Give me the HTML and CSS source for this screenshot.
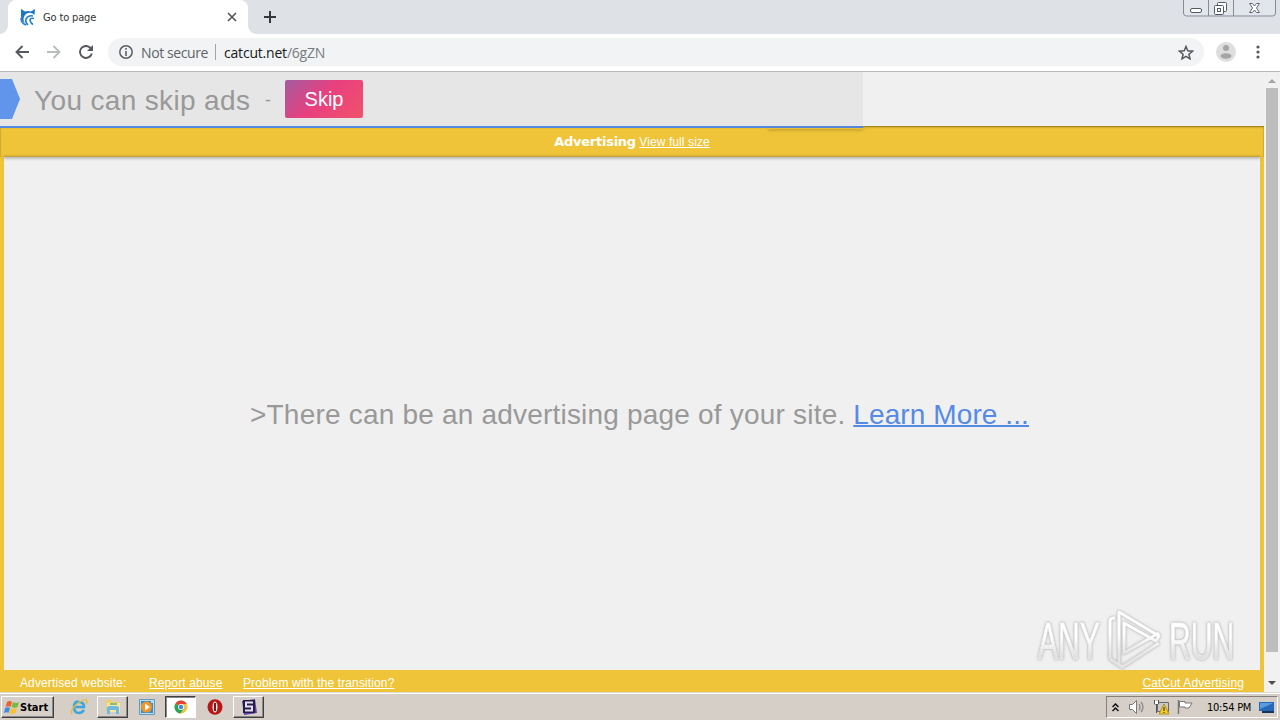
FILE: index.html
```html
<!DOCTYPE html>
<html lang="en">
<head>
  <meta charset="UTF-8">
  <title>Go to page</title>
  <link rel="stylesheet" href="styles.css">
</head>
<body>
  <div class="tab-strip">
    <div class="tab">
      <svg class="favicon" width="16" height="17" viewBox="0 0 16 17">
        <path d="M1 0l4 2.500q3-1 6 0L15 0l-.5 6-2-1.500Q8 2.500 5 6q-3 4 0 8-4-2-4-7z" fill="#1976c5"/>
        <path d="M1 9q0 5 5 7M13 7q-5-1-7 3-1 3 2 6M14 9.500q-4-1-4 2 1 3 3 4" fill="none" stroke="#2580cb" stroke-width="1.600"/>
      </svg>
      <span class="tab-title">Go to page</span>
      <svg class="tab-close" width="10" height="10" viewBox="0 0 10 10"><path d="M1 1l8 8M9 1L1 9" stroke="#55585c" stroke-width="1.700"/></svg>
    </div>
    <svg class="new-tab" width="12" height="12" viewBox="0 0 12 12"><path d="M6 0v12M0 6h12" stroke="#35383d" stroke-width="2"/></svg>
    <svg class="window-buttons" width="94" height="18" viewBox="0 0 94 18">
      <path d="M.5-1v14q0 3 3 3h86q3 0 3-3V-1M25.500 0v16M50.500 0v16" fill="#e2e5ea" stroke="#858b97"/>
      <rect x="7.500" y="8.500" width="11" height="4" rx="1.500" fill="#fff" stroke="#535966"/>
      <rect x="34.500" y="2.500" width="9" height="9" rx="1" fill="#fff" stroke="#535966"/>
      <rect x="31.500" y="5.500" width="9" height="9" rx="1" fill="#fff" stroke="#535966"/>
      <rect x="34.500" y="8.500" width="3" height="3" fill="#fff" stroke="#535966"/>
      <path d="M66.500 3.500h3l2 2.500 2-2.500h3L73.500 8l3 4.500h-3l-2-2.500-2 2.500h-3l3-4.500z" fill="#fff" stroke="#626875"/>
    </svg>
  </div>

  <div class="toolbar">
    <svg width="14" height="14" viewBox="0 0 14 14"><path d="M14 7H1.500M7.500 1l-6 6 6 6" fill="none" stroke="#55585c" stroke-width="1.900"/></svg>
    <svg width="14" height="14" viewBox="0 0 14 14"><path d="M0 7h12.500M6.500 1l6 6-6 6" fill="none" stroke="#babcbe" stroke-width="1.900"/></svg>
    <svg width="14" height="14" viewBox="0 0 14 14"><path d="M12 3.600A6 6 0 1 0 12.800 8.500" fill="none" stroke="#55585c" stroke-width="1.900"/><path d="M14 0v6H8z" fill="#55585c"/></svg>
    <div class="address">
      <svg width="14" height="14" viewBox="0 0 14 14"><circle cx="7" cy="7" r="6.200" fill="none" stroke="#5c6065" stroke-width="1.500"/><path d="M7 3v1.700M7 6v5" stroke="#5c6065" stroke-width="1.600"/></svg>
      <span class="not-secure">Not secure</span>
      <span class="divider"></span>
      <span class="url">catcut.net<span>/6gZN</span></span>
      <svg class="star" width="16" height="15" viewBox="0 0 16 15"><path d="M8 1.500l1.800 4.300 4.700.4-3.600 3.100 1.100 4.500L8 11.300l-4 2.500 1.100-4.500-3.600-3.100 4.700-.4z" fill="none" stroke="#55585c" stroke-width="1.500"/></svg>
    </div>
    <svg class="profile" width="20" height="20" viewBox="0 0 20 20"><circle cx="10" cy="10" r="10" fill="#dedede"/><circle cx="10" cy="6" r="3" fill="#a5a5a5"/><ellipse cx="10" cy="14" rx="5.500" ry="2.800" fill="#a5a5a5"/></svg>
    <svg class="menu" width="4" height="14" viewBox="0 0 4 14"><g fill="#55585c"><circle cx="2" cy="2" r="1.600"/><circle cx="2" cy="7" r="1.600"/><circle cx="2" cy="12" r="1.600"/></g></svg>
  </div>

  <div class="viewport">
    <div class="page">
      <div class="skip-bar">
        <div class="arrow"></div>
        <span class="skip-text">You can skip ads</span>
        <span class="dash">-</span>
        <a class="skip-btn">Skip</a>
      </div>
      <div class="ad-frame">
        <div class="ad-header"><b>Advertising</b> <a>View full size</a></div>
        <div class="ad-body">
          <p class="ad-message"><span>&gt;There can be an advertising page of your site.</span> <a>Learn More ...</a></p>
          <div class="watermark">
            <span>ANY</span>
            <svg width="56" height="62" viewBox="0 0 56 62">
              <defs>
                <linearGradient id="fade" x1="0" y1="0" x2="0" y2="1">
                  <stop offset="0.4" stop-color="#fff"/>
                  <stop offset="0.75" stop-color="#e4e4e4"/>
                </linearGradient>
              </defs>
              <path d="M3 50V12q0-3 5-3M12 46V3l40 24-3 5-32-18v30l35-20M12 46v9l3 3 37-24M3 50l12 8" fill="none" stroke="url(#fade)" stroke-width="3" stroke-linejoin="round"/>
            </svg>
            <span>RUN</span>
          </div>
        </div>
        <div class="ad-footer">
          <span class="advertised">Advertised website:</span>
          <a class="report">Report abuse</a>
          <a class="problem">Problem with the transition?</a>
          <a class="catcut">CatCut Advertising</a>
        </div>
      </div>
    </div>
    <div class="scrollbar">
      <svg width="8" height="4" viewBox="0 0 8 4"><path d="M4 0l4 4H0z" fill="#a3a3a3"/></svg>
      <div class="thumb"></div>
      <svg width="8" height="4" viewBox="0 0 8 4"><path d="M0 0h8L4 4z" fill="#4c4c4c"/></svg>
    </div>
  </div>

  <div class="taskbar">
    <div class="start">
      <svg width="16" height="15" viewBox="0 0 16 15">
        <path d="M3 2q3-2 5 0L6.500 7q-2-1.500-5 0z" fill="#ea6030"/>
        <path d="M9 2q3 2 6 0l-1.500 5q-3 1.500-6 0z" fill="#78b940"/>
        <path d="M1 8q3-1.500 5 0l-1.500 5q-2-1.500-4.500 0z" fill="#3f8de0"/>
        <path d="M7 8q3 1.500 6 0l-1.500 5q-3 2-6 0z" fill="#f6c338"/>
      </svg>
      <span>Start</span>
    </div>
    <div class="task">
      <svg width="18" height="18" viewBox="0 0 18 18"><path d="M14 12q-2 3-5 3-5 0-5-6t5-5q5 0 5 5H5" fill="none" stroke="#3ba5df" stroke-width="2.600"/><path d="M2 16q-2-3 3-8 7-7 11-6 2 1 0 4" fill="none" stroke="#e5bd42" stroke-width="1.500"/></svg>
    </div>
    <div class="task raised">
      <svg width="18" height="16" viewBox="0 0 18 16"><path d="M2 1h6l1 2h7v10H2z" fill="#efcf66"/><path d="M3 4h13v9H3z" fill="#f8e6a0"/><path d="M3 15V9q0-2 3-2h6q3 0 3 2v6h-3v-4H6v4z" fill="#6dbbe2"/><path d="M6 4h7v2H6z" fill="#88b986"/></svg>
    </div>
    <div class="task">
      <svg width="16" height="16" viewBox="0 0 16 16"><path d="M.5.500h15v15H.5z" fill="#b9dbec" stroke="#629abf"/><path d="M2 2h10v2h2v10H2z" fill="#3c8dc5"/><circle cx="7.500" cy="8" r="5.500" fill="#f39522"/><path d="M6 4.500l5 3.500-5 3.500z" fill="#fff"/></svg>
    </div>
    <div class="task raised pressed">
      <svg width="14" height="14" viewBox="0 0 14 14"><circle cx="7" cy="7" r="6.500" fill="#f0c43c"/><path d="M7 7L1.400 3.700A6.500 6.500 0 0 1 12.700 4H7z" fill="#df4436"/><path d="M7 7L1.400 3.700A6.500 6.500 0 0 0 6.500 13.500L9.500 9z" fill="#27a45b"/><circle cx="7" cy="7" r="3" fill="#fff"/><circle cx="7" cy="7" r="2.300" fill="#4788e4"/></svg>
    </div>
    <div class="task">
      <svg width="16" height="16" viewBox="0 0 16 16"><ellipse cx="8" cy="8" rx="7.500" ry="7.800" fill="#b81717"/><ellipse cx="8" cy="8" rx="2.500" ry="5.500" fill="#f5e9e9"/><path d="M7 4h2v8H7z" fill="#851414"/></svg>
    </div>
    <div class="task raised">
      <svg width="16" height="16" viewBox="0 0 16 16"><path d="M1 2l13-2 2 14-13 2z" fill="#6940aa"/><path d="M2 1h12v13H2z" fill="#251c48"/><path d="M12 3.500H5v4h6v4H4" fill="none" stroke="#e5dff6" stroke-width="2"/></svg>
    </div>

    <div class="tray">
      <svg width="7" height="9" viewBox="0 0 7 9"><path d="M.5 4l3-3 3 3M.5 8l3-3 3 3" fill="none" stroke="#111" stroke-width="1.500"/></svg>
      <svg class="speaker" width="16" height="14" viewBox="0 0 16 14"><path d="M.5 4.500h3l4-4v13l-4-4h-3z" fill="#fff" stroke="#777"/><path d="M10 4q2 3 0 6M12 2q4 5 0 10" fill="none" stroke="#888" stroke-width="1.300"/></svg>
      <svg class="network" width="17" height="16" viewBox="0 0 17 16"><path d="M4.500 3.500h11v9h-11z" fill="#c9c9c7" stroke="#686868"/><path d="M1.500 1v4h4V1M3.500 5v9" fill="none" stroke="#555"/><path d="M2 2h3v3H2z" fill="#fff"/><path d="M11 5l5 10H6z" fill="#f5cd27" stroke="#b49220"/><path d="M11 8v4M11 13v1" stroke="#222"/></svg>
      <svg class="flag" width="16" height="16" viewBox="0 0 16 16"><path d="M1.500 1v14" stroke="#777" stroke-width="1.500"/><path d="M2.500 2.500H8v1.500h7l-3 5H8V8H2.500z" fill="#fff" stroke="#777"/></svg>
      <span class="clock">10:54 PM</span>
      <svg width="16" height="13" viewBox="0 0 16 13"><path d="M0 1h15v9H0z" fill="#2769b9"/><path d="M1 2h13L1 8z" fill="#5b9cdb"/><path d="M3 11h12" stroke="#17345f" stroke-width="2"/></svg>
    </div>
  </div>
</body>
</html>
```
FILE: styles.css
```css
* {
  box-sizing: border-box;
}

body {
  margin: 0;
  width: 1280px;
  height: 720px;
  overflow: hidden;
  display: flex;
  flex-direction: column;
  font-family: "Liberation Sans", Arial, sans-serif;
}

svg {
  display: block;
  flex: none;
}

.tab-strip {
  height: 34px;
  padding-left: 8px;
  display: flex;
  align-items: center;
  background: #dee1e6;
}

.tab {
  position: relative;
  width: 240px;
  height: 34px;
  padding: 0 11px 0 12px;
  display: flex;
  align-items: center;
  background: #fff;
  border-radius: 8px 8px 0 0;
}

.tab::before,
.tab::after {
  content: "";
  position: absolute;
  bottom: 0;
  width: 8px;
  height: 8px;
}

.tab::before {
  left: -8px;
  background: radial-gradient(circle at 0 0, #dee1e6 7.5px, #fff 8px);
}

.tab::after {
  right: -8px;
  background: radial-gradient(circle at 100% 0, #dee1e6 7.5px, #fff 8px);
}

.tab-title {
  margin-left: 7px;
  font: 11px "DejaVu Sans Condensed", "DejaVu Sans", sans-serif;
  letter-spacing: -0.15px;
  color: #333;
}

.tab-close {
  margin-left: auto;
}

.new-tab {
  margin-left: 16px;
}

.window-buttons {
  align-self: flex-start;
  margin: 0 3px 0 auto;
}

.toolbar {
  height: 38px;
  padding: 0 20px 1px 15px;
  display: flex;
  align-items: center;
  gap: 18px;
  background: #fff;
  border-bottom: 1px solid #b7b9bb;
}

.address {
  width: 1096px;
  height: 28px;
  margin-left: -3px;
  padding: 0 10px 0 11px;
  display: flex;
  align-items: center;
  border-radius: 14px;
  background: #f1f3f4;
  font: 14px "Open Sans", sans-serif;
}

.not-secure {
  margin-left: 8px;
  width: 67px;
  letter-spacing: -0.4px;
  color: #5f6368;
  white-space: nowrap;
}

.divider {
  width: 1px;
  height: 16px;
  margin: 0 8px 0 7px;
  background: #a2a5a8;
}

.url {
  letter-spacing: -0.2px;
  color: #17191c;
}

.url span {
  color: #777b80;
}

.star {
  margin-left: auto;
}

.profile {
  margin-left: -6px;
}

.menu {
  margin-left: 2px;
}

.viewport {
  height: 620px;
  display: flex;
}

.page {
  width: 1264px;
  display: flex;
  flex-direction: column;
  background: #f0f0f0;
}

.skip-bar {
  position: relative;
  z-index: 3;
  width: 863px;
  height: 56px;
  margin-bottom: -2px;
  display: flex;
  align-items: center;
  background: #e6e6e6;
  border-bottom: 2px solid #558ae0;
}

.skip-bar::after {
  content: "";
  position: absolute;
  right: 0;
  bottom: -3px;
  width: 95px;
  height: 1px;
  box-shadow: 0 1px 3px rgba(80, 65, 20, 0.6);
}

.arrow {
  width: 20px;
  height: 40px;
  background: #6095eb;
  clip-path: polygon(0 0, 60% 0, 100% 50%, 60% 100%, 0 100%);
}

.skip-text {
  width: 217px;
  margin-left: 14px;
  padding-top: 3px;
  font-size: 28px;
  letter-spacing: 0.35px;
  line-height: 32px;
  color: #999;
  white-space: nowrap;
}

.dash {
  margin-left: 14px;
  width: 20px;
  padding-top: 3px;
  font-size: 18px;
  color: #999;
}

.skip-btn {
  width: 78px;
  height: 38px;
  border-radius: 2px;
  background: linear-gradient(135deg, #a35ba0 0%, #e9407f 48%, #f0526c 100%);
  color: #fff;
  font-size: 20px;
  line-height: 38px;
  text-align: center;
}

.ad-frame {
  flex: 1;
  display: flex;
  flex-direction: column;
  background: #efc439;
}

.ad-header {
  position: relative;
  z-index: 1;
  height: 31px;
  padding-top: 1px;
  background: #efc439;
  box-shadow: inset 0 1px 2px rgba(90, 70, 0, 0.65);
  font-size: 12px;
  line-height: 30px;
  text-align: center;
  color: #fff;
}

.ad-header::after {
  content: "";
  position: absolute;
  left: 4px;
  right: 4px;
  bottom: 0;
  height: 1px;
  background: #c6a33a;
  box-shadow: 0 1px 3px rgba(0, 0, 0, 0.65);
}

.ad-header b {
  font: bold 13px "DejaVu Sans", sans-serif;
  letter-spacing: -0.25px;
}

.ad-header a,
.ad-footer a {
  text-decoration: underline;
}

.ad-header a {
  letter-spacing: 0.1px;
}

.ad-body {
  height: 513px;
  margin: 0 4px;
  position: relative;
  display: flex;
  align-items: center;
  justify-content: center;
  background: #f0f0f0;
}

.ad-message {
  width: 780px;
  margin: 2px 0 0 16px;
  display: flex;
  justify-content: space-between;
  font-size: 28px;
  color: #999;
  white-space: nowrap;
}

.ad-message span {
  letter-spacing: 0.2px;
}

.ad-message a {
  margin-right: 1px;
  letter-spacing: 0.1px;
  color: #558be4;
  text-decoration: underline;
  text-decoration-thickness: 2px;
}

/* logo floats over the advertised page */
.watermark {
  position: absolute;
  right: 26px;
  bottom: -2px;
  width: 196px;
  height: 64px;
  display: flex;
  align-items: center;
  font-size: 51px;
  filter: drop-shadow(0 0 1px #bbb) drop-shadow(0 0 1px #ccc);
}

.watermark span {
  width: 66px;
  padding-top: 2px;
  transform: scaleX(0.59);
  transform-origin: 0 50%;
  -webkit-text-stroke: 0.5px #f3f3f3;
}

.watermark span {
  color: transparent;
  background: linear-gradient(#fff 45%, #e0e0e0 75%) 0 0 / 120px 100%;
  width: 120px;
  margin-right: -54px;
  -webkit-background-clip: text;
  background-clip: text;
}

.watermark svg {
  margin: 0 6px 0 4px;
}

.ad-footer {
  flex: 1;
  padding: 3px 20px 0;
  display: flex;
  align-items: center;
  font-size: 12px;
  letter-spacing: 0.12px;
  color: #fff;
}

.advertised {
  width: 129px;
}

.report {
  width: 74px;
  margin-right: 20px;
}

.catcut {
  margin-left: auto;
}

.scrollbar {
  width: 16px;
  padding: 7px 0;
  display: flex;
  flex-direction: column;
  align-items: center;
  justify-content: space-between;
  background: #f1f1f1;
}

.thumb {
  width: 12px;
  height: 564px;
  margin: 5px 0 auto;
  background: #bdbdbd;
}

.taskbar {
  height: 28px;
  padding: 2px 2px 1px 1px;
  display: flex;
  align-items: center;
  background: #d5cfc8;
  border-top: 1px solid #dedbd5;
  box-shadow: inset 0 1px #fff;
}

.start {
  width: 53px;
  height: 22px;
  margin-right: 9px;
  padding-left: 2px;
  display: flex;
  align-items: center;
  border: 1px solid;
  border-color: #fff #404040 #404040 #fff;
  box-shadow: inset -1px -1px #888;
  font: bold 11px "DejaVu Sans Condensed", "DejaVu Sans", sans-serif;
}

.task {
  width: 31px;
  height: 22px;
  margin-right: 3px;
  display: flex;
  align-items: center;
  justify-content: center;
}

.raised {
  border: 1px solid;
  border-color: #fff #404040 #404040 #fff;
  box-shadow: inset -1px -1px #888;
}

.pressed {
  background: #fff;
  border-color: #404040 #fff #fff #404040;
  box-shadow: inset 1px 1px #888;
}

.tray {
  width: 172px;
  height: 22px;
  margin-left: auto;
  padding: 0 2px 0 5px;
  display: flex;
  align-items: center;
  border: 1px solid;
  border-color: #858078 #fff #fff #858078;
}

.speaker {
  margin-left: 10px;
}

.network {
  margin-left: 8px;
}

.flag {
  margin-left: 7px;
}

.clock {
  width: 46px;
  margin: 0 auto 0 14px;
  font: 11px "DejaVu Sans Condensed", "DejaVu Sans", sans-serif;
  letter-spacing: -0.25px;
  white-space: nowrap;
}
```
